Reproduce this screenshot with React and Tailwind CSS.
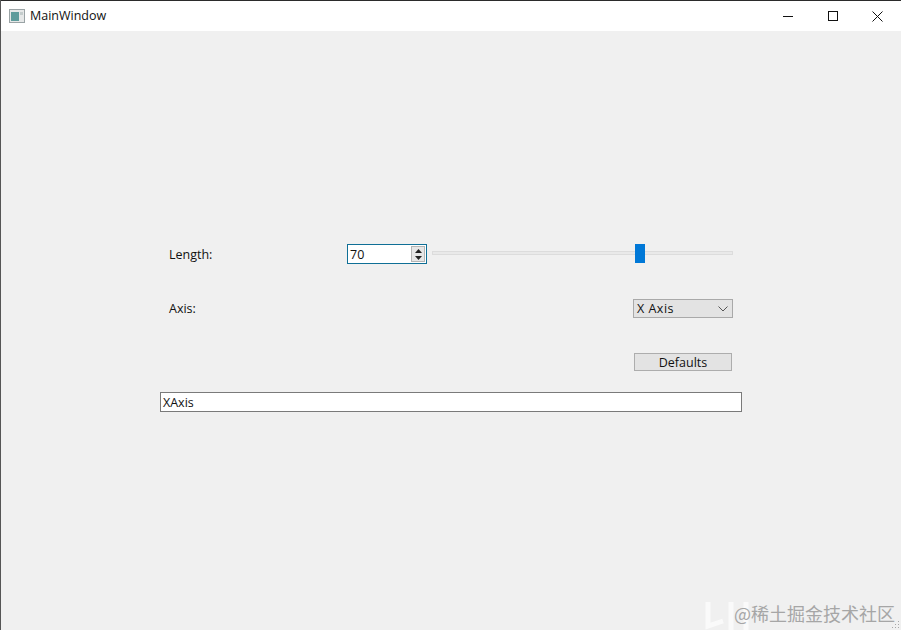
import { useState } from "react";

const font = "font-['Open_Sans','Liberation_Sans',sans-serif]";

const TitleBar = () => (
  <div className="flex h-[31px] shrink-0 items-center border-t border-[#2b2b2b] bg-white">
    {/* Qt window icon */}
    <svg width="16" height="14" viewBox="0 0 16 14" className="ml-[8px]">
      <rect x="0.5" y="0.5" width="15" height="13" fill="#e6e8e8" stroke="#9aa3a5" />
      <rect x="2" y="3" width="8" height="9" fill="#5f9c9c" />
      <rect x="11" y="3" width="3" height="3" fill="#c4cccc" />
    </svg>
    <span className="ml-[5px] text-[12.5px] text-[#111]">MainWindow</span>
    <div className="ml-auto flex h-full items-center">
      <div className="flex w-[45px] items-center justify-center">
        <svg width="10" height="10" viewBox="0 0 10 10">
          <path d="M0 5.5H10" stroke="#111" strokeWidth="1" />
        </svg>
      </div>
      <div className="flex w-[45px] items-center justify-center">
        <svg width="10" height="10" viewBox="0 0 10 10">
          <rect x="0.5" y="0.5" width="9" height="9" fill="none" stroke="#111" />
        </svg>
      </div>
      <div className="flex w-[46px] items-center justify-center pr-[2px]">
        <svg width="11" height="11" viewBox="0 0 11 11">
          <path d="M0.5 0.5L10.5 10.5M10.5 0.5L0.5 10.5" stroke="#111" strokeWidth="1" />
        </svg>
      </div>
    </div>
  </div>
);

const SpinBox = ({ value }) => (
  <div className="flex h-[20px] w-[80px] items-center border border-[#0f6f96] bg-white pl-[2px] pr-[1px]">
    <span className="flex-1 pt-[2px] text-[12.5px] text-[#111]">{value}</span>
    <div className="flex h-[16px] w-[14px] flex-col border border-[#b5b5b5] bg-[#e6e6e6]">
      <div className="flex flex-1 items-center justify-center">
        <svg width="7" height="4" viewBox="0 0 7 4">
          <path d="M3.5 0L7 4H0Z" fill="#222" />
        </svg>
      </div>
      <div className="flex flex-1 items-center justify-center">
        <svg width="7" height="4" viewBox="0 0 7 4">
          <path d="M0 0H7L3.5 4Z" fill="#222" />
        </svg>
      </div>
    </div>
  </div>
);

const Slider = ({ value }) => (
  <div className="relative flex h-[20px] w-[301px] items-center">
    <div className="mb-[2px] h-[4px] w-full border border-[#dcdcdc] bg-[#e9e9e9]" />
    {/* handle sits over the groove */}
    <div
      className="absolute top-0 h-[19px] w-[10px] bg-[#0078d7]"
      style={{ left: `${value}px` }}
    />
  </div>
);

export default function App() {
  const [length] = useState(70);

  return (
    <div className={`${font} relative flex h-[630px] w-[901px] flex-col overflow-hidden border-l border-[#555] bg-[#f0f0f0]`}>
      <TitleBar />

      <div className="ml-[159px] mt-[213px] flex w-[582px] flex-col">
        {/* Length row */}
        <div className="flex h-[20px] items-center pl-[9px] text-[12.5px] text-[#111]">
          <span className="w-[178px] pt-[2px]">Length:</span>
          <SpinBox value={length} />
          <div className="ml-[5px]">
            <Slider value={length * 3 - 7} />
          </div>
        </div>

        {/* Axis row */}
        <div className="mt-[35px] flex h-[19px] items-center justify-between pl-[9px] pr-[9px] text-[12.5px] text-[#111]">
          <span className="pt-[1px]">Axis:</span>
          <div className="flex h-[19px] w-[100px] items-center justify-between border border-[#a9a9a9] bg-[#e3e3e3] pl-[3px] pr-[3px]">
            <span className="pt-[1px] tracking-[0.5px]">X Axis</span>
            <svg width="10" height="6" viewBox="0 0 10 6" className="mr-[1px]">
              <path d="M0.5 0.5L5 5L9.5 0.5" fill="none" stroke="#555" strokeWidth="1" />
            </svg>
          </div>
        </div>

        {/* Defaults button */}
        <div className="mt-[35px] flex justify-end pr-[10px]">
          <button className="h-[18px] w-[98px] border border-[#adadad] bg-[#e3e3e3] pt-[3px] text-[12.5px] leading-none text-[#111]">
            Defaults
          </button>
        </div>

        <div className="mt-[21px] flex h-[20px] w-[582px] items-center border border-[#7a7a7a] bg-white pl-[2px] pt-[2px] text-[12.5px] text-[#111]">
          XAxis
        </div>
      </div>

      {/* faint logo and site watermark over the window corner */}
      <svg width="52" height="34" viewBox="0 0 52 34" className="absolute bottom-0 left-[702px]">
        <path d="M5 6V30L20 25M28 6V34M43 6V34" fill="none" stroke="#fafafa" strokeWidth="5" />
      </svg>
      <div className="absolute bottom-[6px] right-[6px] font-['Noto_Sans_CJK_SC','Noto_Sans',sans-serif] text-[18px] leading-[22px] text-[#a6a6a6]">
        @稀土掘金技术社区
      </div>
      <svg width="9" height="9" viewBox="0 0 9 9" className="absolute bottom-[1px] right-[1px]">
        <path d="M7 1h1v1H7zM4 4h1v1H4zM7 4h1v1H7zM1 7h1v1H1zM4 7h1v1H4zM7 7h1v1H7z" fill="#a8a8a8" />
      </svg>
    </div>
  );
}
